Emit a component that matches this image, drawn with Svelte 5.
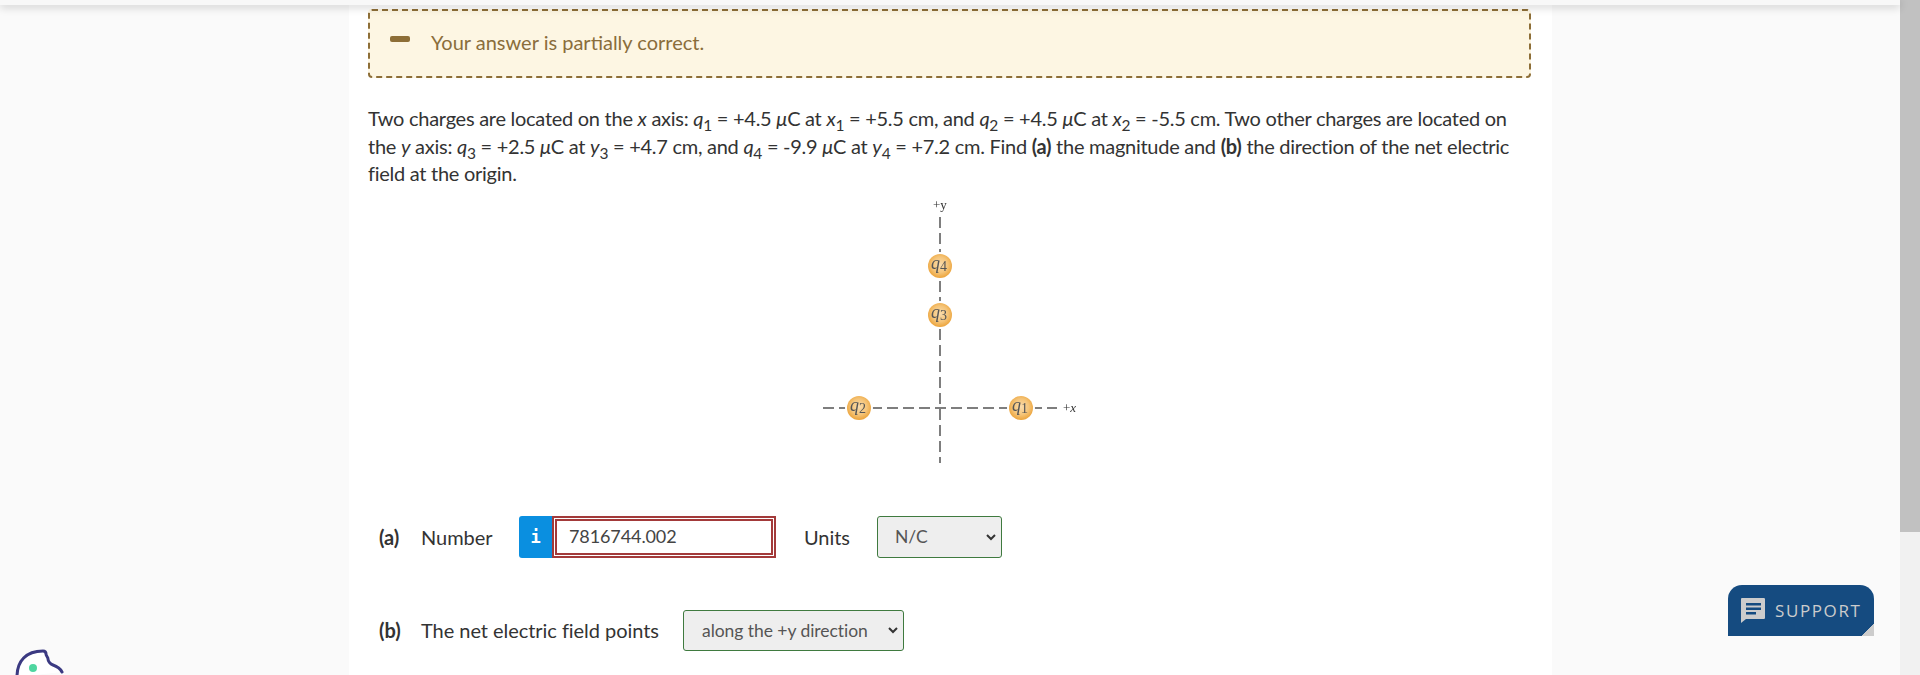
<script lang="ts">
  const charges = [
    { cx: 940, cy: 266, main: "q", sub: "4" },
    { cx: 940, cy: 315, main: "q", sub: "3" },
    { cx: 859, cy: 408, main: "q", sub: "2" },
    { cx: 1021, cy: 408, main: "q", sub: "1" },
  ];
</script>

<div class="page">
  <div class="topbar"></div>

  <main class="content">
    <div class="alert">
      <span class="alert-icon"></span>
      <span>Your answer is partially correct.</span>
    </div>

    <p class="question">
      Two charges are located on the <i>x</i> axis: <i>q</i><sub>1</sub> = +4.5 <i>μ</i>C at <i>x</i><sub>1</sub> = +5.5 cm, and <i>q</i><sub>2</sub> = +4.5 <i>μ</i>C at <i>x</i><sub>2</sub> = -5.5 cm. Two other charges are located on the <i>y</i> axis: <i>q</i><sub>3</sub> = +2.5 <i>μ</i>C at <i>y</i><sub>3</sub> = +4.7 cm, and <i>q</i><sub>4</sub> = -9.9 <i>μ</i>C at <i>y</i><sub>4</sub> = +7.2 cm. Find <b>(a)</b> the magnitude and <b>(b)</b> the direction of the net electric field at the origin.
    </p>

    <svg class="figure" viewBox="800 195 300 280" width="300" height="280">
      <defs>
        <radialGradient id="ball" cx="50%" cy="45%" r="55%">
          <stop offset="0%" stop-color="#f9dcae" />
          <stop offset="60%" stop-color="#f5c478" />
          <stop offset="100%" stop-color="#eca43c" />
        </radialGradient>
        <filter id="soft"><feGaussianBlur stdDeviation="0.4" /></filter>
      </defs>
      <g filter="url(#soft)">
        <line x1="940" y1="217" x2="940" y2="463" stroke="#555" stroke-width="1.5" stroke-dasharray="11 5" />
        <line x1="823" y1="408" x2="1057" y2="408" stroke="#555" stroke-width="1.5" stroke-dasharray="11 5" />
        {#each charges as c}
          <circle cx={c.cx} cy={c.cy} r="14" fill="#fff" />
          <circle cx={c.cx} cy={c.cy} r="12" fill="url(#ball)" />
          <text class="fig-label" x={c.cx - 9} y={c.cy + 3}>{c.main}<tspan class="fig-sub" dy="2">{c.sub}</tspan></text>
        {/each}
        <text class="fig-axis" x="933" y="209">+y</text>
        <text class="fig-axis" x="1063" y="412">+<tspan font-style="italic">x</tspan></text>
      </g>
    </svg>

    <div class="answer-row first">
      <b class="part">(a)</b>
      <span class="label">Number</span>
      <button class="info" type="button">i</button>
      <div class="input-wrap">7816744.002</div>
      <span class="units">Units</span>
      <div class="select units-select">
        <span>N/C</span>
        <svg width="12" height="8" viewBox="0 0 12 8"><path d="M2 2l4 4 4-4" fill="none" stroke="#333" stroke-width="2" /></svg>
      </div>
    </div>

    <div class="answer-row second">
      <b class="part">(b)</b>
      <span class="label">The net electric field points</span>
      <div class="select dir-select">
        <span>along the +y direction</span>
        <svg width="12" height="8" viewBox="0 0 12 8"><path d="M2 2l4 4 4-4" fill="none" stroke="#333" stroke-width="2" /></svg>
      </div>
    </div>
  </main>

  <div class="scrollbar"><div class="thumb"></div></div>

  <div class="support">
    <svg width="26" height="27" viewBox="0 0 26 27">
      <path d="M2 1h22a1.500 1.500 0 0 1 1 1v19a1.500 1.500 0 0 1-1 1H6l-5 4V2a1 1 0 0 1 1-1z" fill="#ccc" />
      <path d="M6 6h15v2.500H6zM6 10.500h15V13H6zM6 15h10v2.500H6z" fill="#154b80" />
    </svg>
    <span>SUPPORT</span>
    <i class="corner"></i>
  </div>

  <svg class="cookie" width="70" height="30" viewBox="0 0 70 30">
    <path d="M17 32C17 16 26 6 43 6c2 0 3 1 3 3 0 2 2 3 2 5s2 5 5 6c3 1 7 3 9 7" fill="#fff" stroke="#3b3a82" stroke-width="3" stroke-linecap="round" />
    <circle cx="33" cy="23" r="4" fill="#4fd6a0" />
  </svg>
</div>

<style>
  :global(body) {
    margin: 0;
    overflow: hidden;
    background: #fafafa;
  }

  .page {
    position: relative;
    height: 675px;
    overflow: hidden;
    display: flex;
    justify-content: flex-start;
    padding-left: 349px;
    box-sizing: border-box;
    background: #fafafa;
    font-family: Lato, "Liberation Sans", sans-serif;
    color: #333;
  }

  .topbar {
    position: absolute;
    top: 0;
    left: 0;
    right: 20px;
    height: 5px;
    background: #f8f8f8;
    box-shadow: 0 2px 8px rgba(0, 0, 0, 0.22);
    z-index: 5;
  }

  .content {
    width: 1203px;
    flex: none;
    background: #fff;
    padding: 9px 21px 0 19px;
    box-sizing: border-box;
  }

  .alert {
    height: 69px;
    box-sizing: border-box;
    display: flex;
    align-items: center;
    background: #fdf6e3;
    border: 2px dashed #8d6e37;
    border-radius: 4px;
    padding: 0 0 4px 20px;
    color: #8a6d3b;
    font-size: 20px;
  }

  .alert-icon {
    width: 20px;
    height: 6px;
    border-radius: 2px;
    background: #8d6e37;
    margin: -6px 21px 0 0;
  }

  .question {
    margin: 27px 0 0;
    font-size: 20px;
    line-height: 27.5px;
    letter-spacing: -0.27px;
  }

  .question sub {
    font-size: 15.5px;
    line-height: 0;
  }

  .figure {
    display: block;
    margin: 7px 0 0 432px;
  }

  .fig-label {
    font-family: "Liberation Serif", serif;
    font-style: italic;
    font-size: 18px;
    fill: #555;
  }

  .fig-sub {
    font-size: 14px;
    font-style: normal;
  }

  .fig-axis {
    font-family: "Liberation Serif", serif;
    font-size: 13px;
    fill: #333;
  }

  .answer-row {
    display: flex;
    align-items: center;
    font-size: 20px;
    letter-spacing: -0.05px;
    margin-left: 11px;
  }

  .answer-row.first {
    margin-top: 41px;
    height: 42px;
  }

  .answer-row.second {
    margin-top: 52px;
    height: 41px;
  }

  .part {
    width: 42px;
    flex: none;
  }

  .first .label {
    width: 98px;
    flex: none;
  }

  .second .label {
    width: 262px;
    flex: none;
  }

  .info {
    width: 33px;
    height: 42px;
    flex: none;
    border: 0;
    padding: 0;
    border-radius: 3px 0 0 3px;
    background: #0a8fe0;
    color: #fff;
    font-family: "DejaVu Sans Mono", monospace;
    font-weight: 700;
    font-size: 17px;
  }

  .input-wrap {
    width: 224px;
    height: 42px;
    flex: none;
    box-sizing: border-box;
    border: 5px double #a33a3a;
    padding: 0 0 1px 12px;
    display: flex;
    align-items: center;
    background: #fff;
    color: #444;
    font-size: 18px;
    letter-spacing: -0.1px;
  }

  .units {
    width: 73px;
    flex: none;
    margin-left: 28px;
    box-sizing: border-box;
  }

  .select {
    height: 100%;
    flex: none;
    box-sizing: border-box;
    display: flex;
    align-items: center;
    justify-content: space-between;
    border: 1px solid #3f7a3f;
    border-radius: 3px;
    background: #eee;
    color: #555;
    font-size: 17.5px;
  }

  .units-select {
    width: 125px;
    padding: 0 4px 0 17px;
  }

  .dir-select {
    width: 221px;
    padding: 0 4px 0 18px;
  }

  .scrollbar {
    position: absolute;
    top: 0;
    right: 0;
    bottom: 0;
    width: 20px;
    background: #f1f1f1;
  }

  .thumb {
    height: 532px;
    background: #c1c1c1;
  }

  .support {
    position: absolute;
    left: 1728px;
    top: 585px;
    width: 146px;
    height: 51px;
    box-sizing: border-box;
    display: flex;
    align-items: center;
    gap: 9px;
    padding-left: 12px;
    background: #154b80;
    border-radius: 14px 14px 0 0;
    color: #ccc;
    font-family: "Open Sans", sans-serif;
    font-size: 17px;
    letter-spacing: 1.6px;
  }

  .corner {
    position: absolute;
    right: 0;
    bottom: 0;
    width: 12px;
    height: 12px;
    background: linear-gradient(135deg, #154b80 50%, #ccc 50%);
  }

  .cookie {
    position: absolute;
    left: 0;
    bottom: 0;
  }
</style>
